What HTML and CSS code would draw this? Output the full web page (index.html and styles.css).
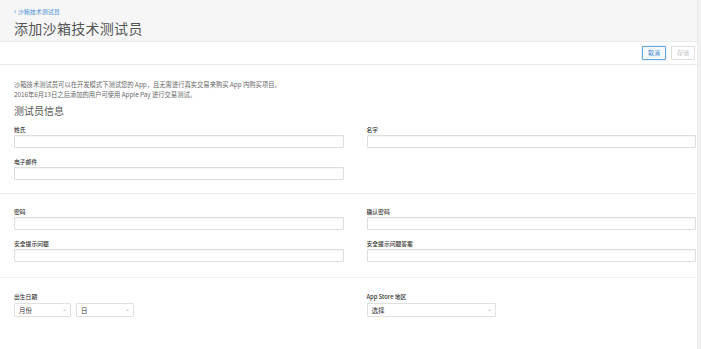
FILE: index.html
```html
<!DOCTYPE html>
<html lang="zh">
<head>
<meta charset="utf-8">
<title>添加沙箱技术测试员</title>
<link rel="stylesheet" href="styles.css">
</head>
<body>
<div class="shell">
  <main class="page">
    <header class="header">
      <a class="crumb" href="#"><span class="chev">‹</span> 沙箱技术测试员</a>
      <h1 class="title">添加沙箱技术测试员</h1>
    </header>
    <div class="toolbar">
      <button class="btn btn-cancel" type="button">取消</button>
      <button class="btn btn-save" type="button">存储</button>
    </div>
    <section class="content">
      <p class="desc">沙箱技术测试员可以在开发模式下测试您的 App，且无需进行真实交易来购买 App 内购买项目。<br>2016年6月13日之后添加的用户可使用 Apple Pay 进行交易测试。</p>
      <h2 class="section-title">测试员信息</h2>
      <div class="grid grid-first">
        <div class="field"><label>姓氏</label><div class="input"></div></div>
        <div class="field"><label>名字</label><div class="input"></div></div>
        <div class="field"><label>电子邮件</label><div class="input"></div></div>
      </div>
    </section>
    <section class="content sep">
      <div class="grid">
        <div class="field"><label>密码</label><div class="input"></div></div>
        <div class="field"><label>确认密码</label><div class="input"></div></div>
        <div class="field"><label>安全提示问题</label><div class="input"></div></div>
        <div class="field"><label>安全提示问题答案</label><div class="input"></div></div>
      </div>
    </section>
    <section class="content sep last">
      <div class="grid">
        <div class="field">
          <label>出生日期</label>
          <div class="selects">
            <div class="select sel-month"><span>月份</span><span class="arrow">⌄</span></div>
            <div class="select sel-day"><span>日</span><span class="arrow">⌄</span></div>
          </div>
        </div>
        <div class="field">
          <label>App Store 地区</label>
          <div class="selects">
            <div class="select sel-region"><span>选择</span><span class="arrow">⌄</span></div>
          </div>
        </div>
      </div>
    </section>
  </main>
  <div class="scrollbar"></div>
</div>
</body>
</html>
```

FILE: styles.css
```css
* { box-sizing: border-box; }
html, body {
  margin: 0;
  padding: 0;
  background: #ffffff;
}
body {
  font-family: "Noto Sans CJK SC", "Liberation Sans", sans-serif;
  color: #333;
  width: 701px;
  height: 349px;
  overflow: hidden;
}
.shell {
  display: flex;
  height: 349px;
}
.page {
  width: 697px;
  flex: none;
}
.scrollbar {
  flex: 1;
  background: #f1f1f1;
  border-left: 1px solid #e9e9e9;
}
.header {
  height: 42px;
  background: #f6f6f6;
  border-bottom: 1px solid #ebebeb;
  padding: 6px 0 0 14px;
}
.crumb {
  display: block;
  font-size: 6px;
  line-height: 10px;
  color: #4a90d6;
  text-decoration: none;
}
.chev { font-size: 8px; }
.title {
  margin: 2px 0 0;
  font-size: 14px;
  line-height: 19px;
  font-weight: 400;
  color: #555;
  letter-spacing: 0.3px;
}
.toolbar {
  height: 23px;
  border-bottom: 1px solid #e8e8e8;
  display: flex;
  justify-content: flex-end;
  align-items: center;
  gap: 5px;
  padding-right: 2px;
}
.btn {
  font-family: inherit;
  font-size: 6px;
  line-height: 8px;
  height: 14px;
  width: 24px;
  padding: 0;
  border-radius: 1px;
  background: #fff;
  cursor: pointer;
}
.btn-cancel {
  border: 1px solid #6aa8dc;
  color: #3c87cc;
  background: #f3f8fd;
  box-shadow: 0 0 2px rgba(90, 160, 220, 0.5);
}
.btn-save {
  border: 1px solid #e0e0e0;
  color: #c4c4c4;
}
.content {
  padding: 0 1px 0 14px;
}
.desc {
  margin: 15px 0 0;
  font-size: 6.3px;
  line-height: 9.5px;
  color: #666;
}
.section-title {
  margin: 6px 0 0;
  font-size: 10px;
  line-height: 12px;
  font-weight: 400;
  color: #555;
}
.grid {
  display: grid;
  grid-template-columns: 1fr 1fr;
  column-gap: 23px;
  row-gap: 10px;
}
.grid-first {
  margin-top: 9px;
  padding-bottom: 13px;
}
.sep {
  border-top: 1px solid #ededed;
  padding-top: 14px;
  padding-bottom: 15px;
}
.last { border-top-color: #f3f3f3; padding-top: 15px; }
.field {
  display: flex;
  flex-direction: column;
  gap: 1px;
}
.field label {
  font-size: 5.8px;
  line-height: 8px;
  color: #333;
  font-weight: 500;
}
.input {
  height: 13px;
  border: 1px solid #dedede;
  border-radius: 1px;
  background: #fff;
  box-shadow: inset 0 1px 1px rgba(0, 0, 0, 0.04);
}
.selects {
  display: flex;
  gap: 5px;
  margin-top: 1px;
}
.select {
  height: 14px;
  border: 1px solid #e0e0e0;
  border-radius: 1px;
  display: flex;
  align-items: center;
  justify-content: space-between;
  padding: 0 3px 0 4px;
  font-size: 6.5px;
  color: #333;
  background: #fff;
}
.arrow {
  font-size: 6px;
  color: #aaa;
  line-height: 6px;
  margin-top: -3px;
}
.sel-month { width: 57px; }
.sel-day { width: 58px; }
.sel-region { width: 129px; }
```
